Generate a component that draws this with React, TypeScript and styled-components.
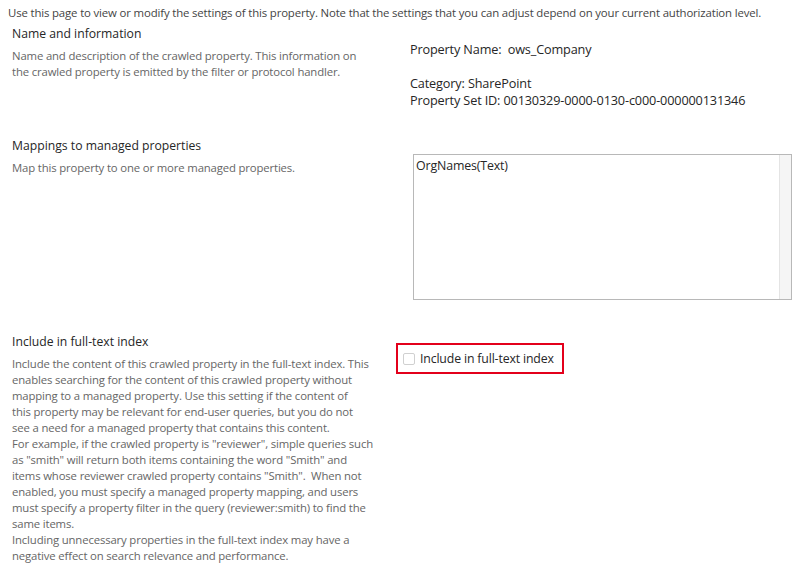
import styled, { createGlobalStyle } from 'styled-components';

const GlobalStyle = createGlobalStyle`
  html, body {
    margin: 0;
    padding: 0;
    background: #ffffff;
  }
  body {
    font-family: 'Open Sans', 'Noto Sans', sans-serif;
    color: #444444;
  }
`;

const Page = styled.div`
  width: 800px;
  height: 572px;
  overflow: hidden;
  box-sizing: border-box;
  padding: 5px 0 0 8px;
`;

const Intro = styled.div`
  font-size: 11.4px;
  letter-spacing: -0.15px;
  color: #444444;
  line-height: 15px;
  white-space: nowrap;
`;

const Section = styled.div<{ $height: number }>`
  display: grid;
  grid-template-columns: 398px 1fr;
  height: ${(p) => p.$height}px;
  padding-left: 4px;
`;

const Left = styled.div<{ $top?: number }>`
  padding-top: ${(p) => p.$top ?? 0}px;
`;

const Heading = styled.div`
  font-size: 12.2px;
  color: #262626;
  line-height: 18px;
  margin-bottom: 5px;
`;

const Desc = styled.div`
  font-size: 11.35px;
  letter-spacing: -0.15px;
  line-height: 16px;
  color: #666666;
`;

const Line = styled.div`
  white-space: nowrap;
`;

const Right = styled.div<{ $top: number }>`
  padding-top: ${(p) => p.$top}px;
  font-size: 12.7px;
  letter-spacing: -0.15px;
  color: #262626;
  line-height: 17px;
`;

const Gap = styled.div`
  height: 17px;
`;

const ListBox = styled.div`
  margin-left: 3px;
  width: 379px;
  height: 146px;
  border: 1px solid #b8b8b8;
  box-sizing: border-box;
  display: flex;
`;

const ListItems = styled.div`
  flex: 1;
  padding: 2px 2px;
  font-size: 12.4px;
  letter-spacing: -0.15px;
  color: #262626;
`;

const Scroll = styled.div`
  width: 11px;
  background: #f5f5f5;
  border-left: 1px solid #e4e4e4;
`;

const CheckFrame = styled.label`
  display: inline-flex;
  align-items: center;
  gap: 5px;
  margin-left: -14px;
  width: 168px;
  height: 31px;
  box-sizing: border-box;
  border: 2px solid #e3001b;
  padding-left: 5px;
  font-size: 12.3px;
  letter-spacing: -0.15px;
  color: #262626;
`;

const Box = styled.span`
  width: 10px;
  height: 10px;
  border: 1px solid #d0d0d0;
  border-radius: 2px;
  background: #fff;
`;

const nameDesc = [
  'Name and description of the crawled property. This information on',
  'the crawled property is emitted by the filter or protocol handler.',
];

const indexDesc = [
  'Include the content of this crawled property in the full-text index. This',
  'enables searching for the content of this crawled property without',
  'mapping to a managed property. Use this setting if the content of',
  'this property may be relevant for end-user queries, but you do not',
  'see a need for a managed property that contains this content.',
  'For example, if the crawled property is "reviewer", simple queries such',
  'as "smith" will return both items containing the word "Smith" and',
  'items whose reviewer crawled property contains "Smith".\u00a0 When not',
  'enabled, you must specify a managed property mapping, and users',
  'must specify a property filter in the query (reviewer:smith) to find the',
  'same items.',
  'Including unnecessary properties in the full-text index may have a',
  'negative effect on search relevance and performance.',
];

export default function App() {
  return (
    <Page>
      <GlobalStyle />
      <Intro>
        Use this page to view or modify the settings of this property. Note that the settings that you can adjust depend on your current authorization level.
      </Intro>
      <Section $height={117}>
        <Left $top={5}>
          <Heading>Name and information</Heading>
          <Desc>
            {nameDesc.map((l) => (
              <Line key={l}>{l}</Line>
            ))}
          </Desc>
        </Left>
        <Right $top={21}>
          <div>Property Name:&nbsp; ows_Company</div>
          <Gap />
          <div>Category: SharePoint</div>
          <div>Property Set ID: 00130329-0000-0130-c000-000000131346</div>
        </Right>
      </Section>
      <Section $height={196}>
        <Left>
          <Heading>Mappings to managed properties</Heading>
          <Desc>Map this property to one or more managed properties.</Desc>
        </Left>
        <Right $top={17}>
          <ListBox>
            <ListItems>OrgNames(Text)</ListItems>
            <Scroll />
          </ListBox>
        </Right>
      </Section>
      <Section $height={240}>
        <Left>
          <Heading>Include in full-text index</Heading>
          <Desc>
            {indexDesc.map((l) => (
              <Line key={l}>{l}</Line>
            ))}
          </Desc>
        </Left>
        <Right $top={10}>
          <CheckFrame>
            <Box />
            Include in full-text index
          </CheckFrame>
        </Right>
      </Section>
    </Page>
  );
}
